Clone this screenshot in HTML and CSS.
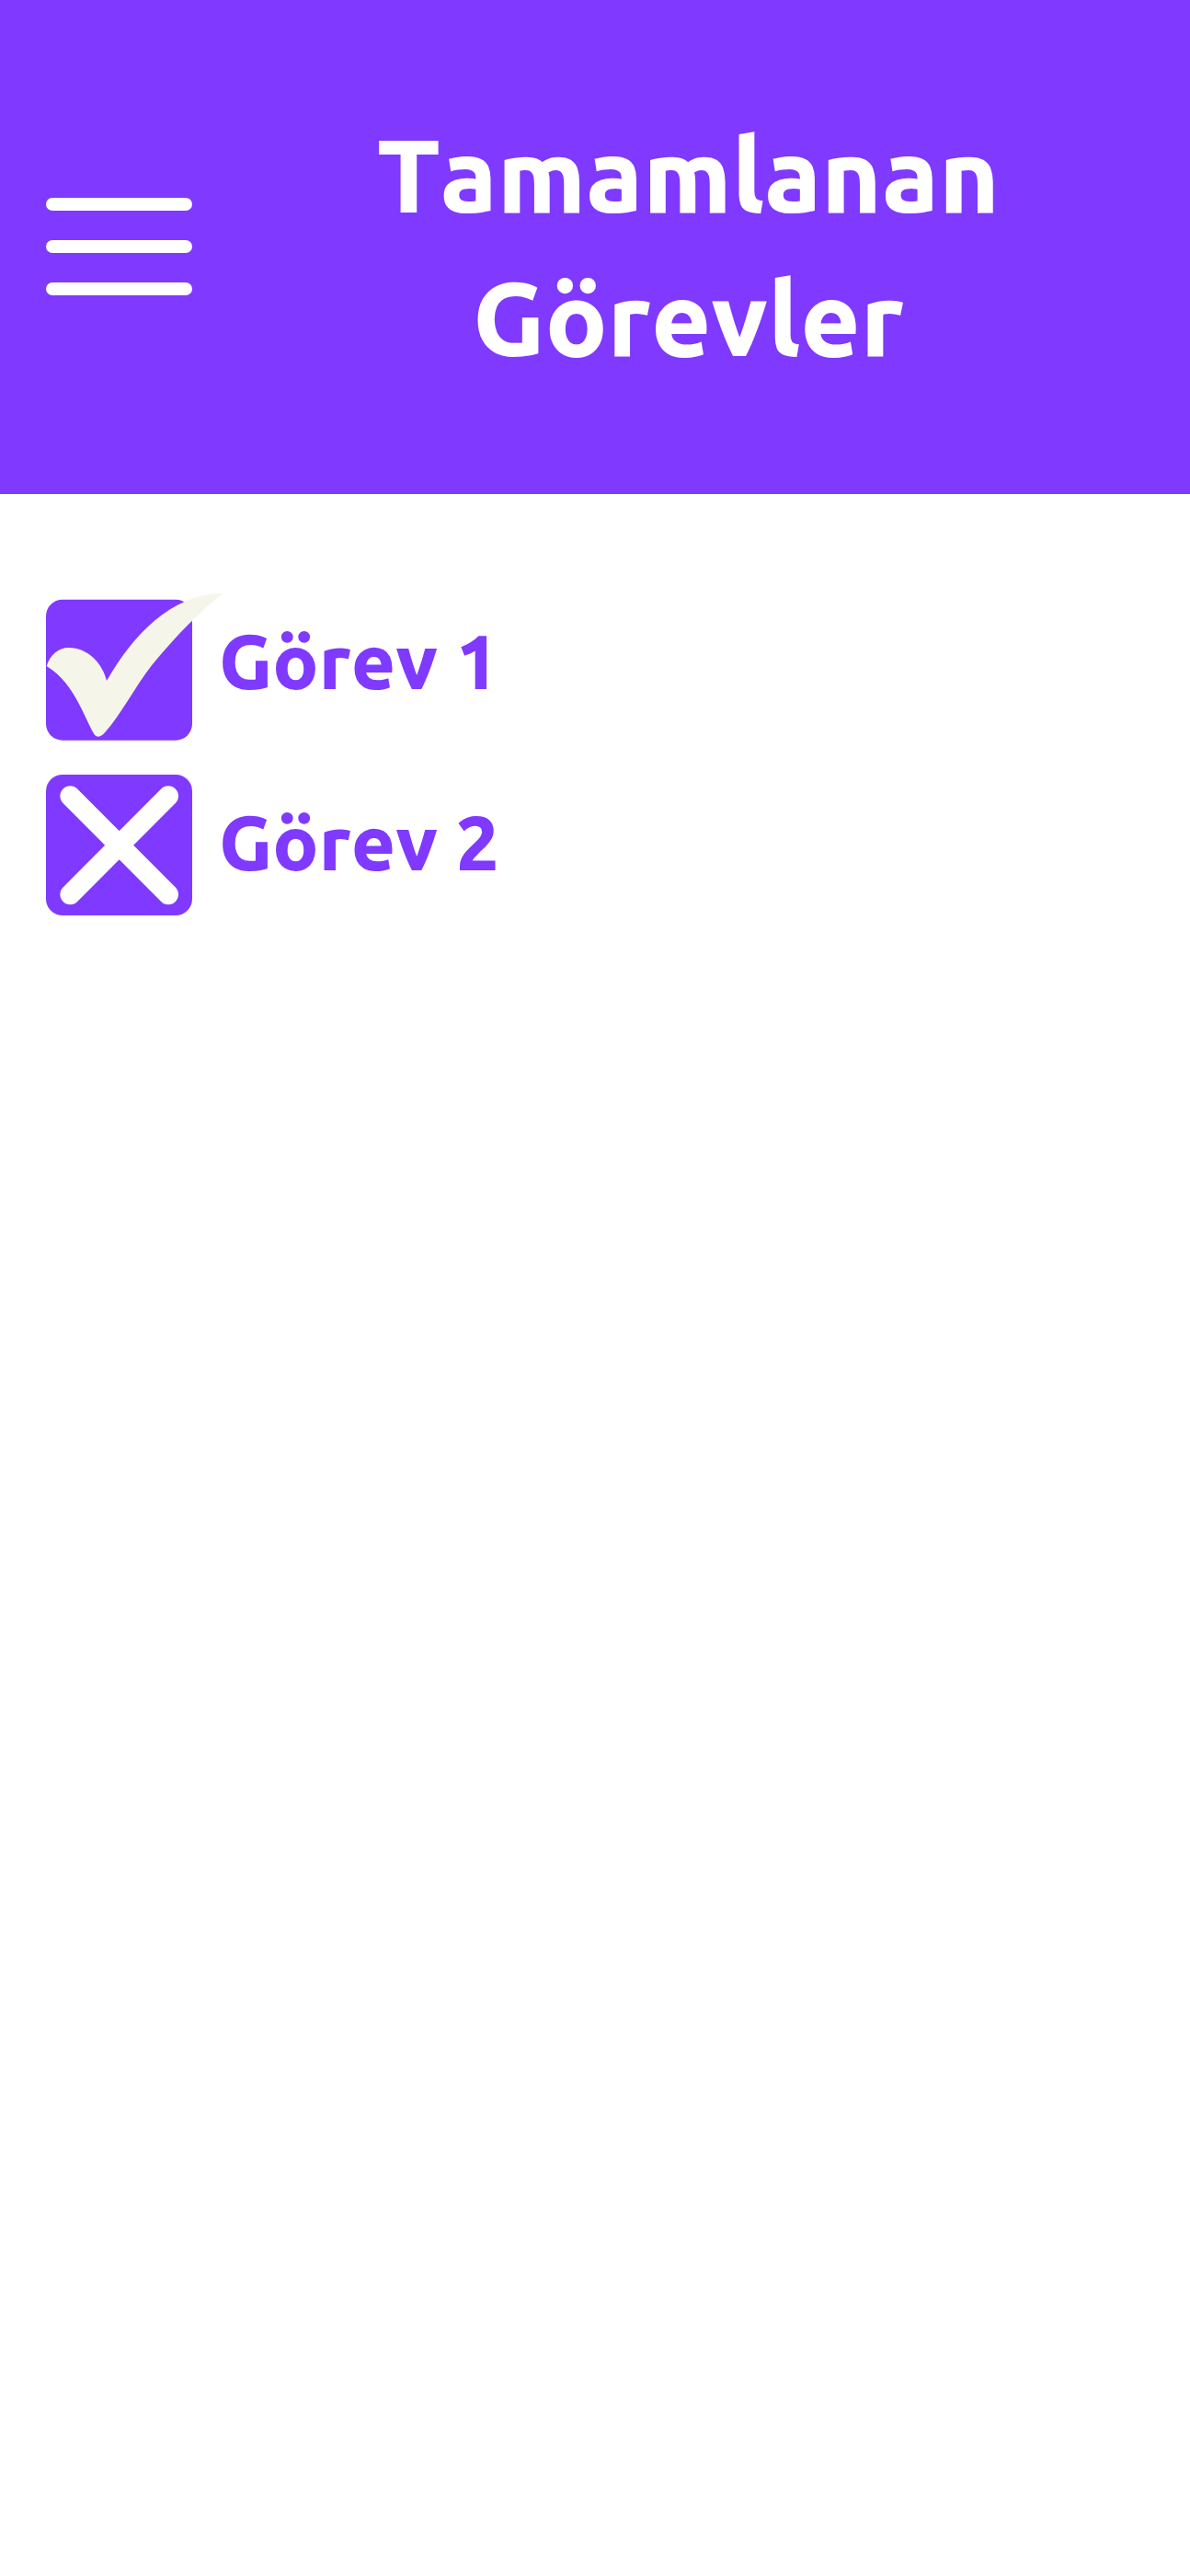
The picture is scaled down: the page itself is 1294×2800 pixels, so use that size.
FILE: index.html
```html
<!DOCTYPE html>
<html lang="tr">
<head>
<meta charset="utf-8">
<meta name="viewport" content="width=device-width, initial-scale=1">
<title>Tamamlanan Görevler</title>
<link rel="stylesheet" href="styles.css">
</head>
<body>
<header class="header">
  <button class="menu" type="button" aria-label="Menü">
    <span class="menu-bar"></span>
    <span class="menu-bar"></span>
    <span class="menu-bar"></span>
  </button>
  <h1 class="title">Tamamlanan Görevler</h1>
</header>
<main>
  <ul class="tasks">
    <li class="task">
      <span class="tick">
        <input class="tick-input" type="checkbox" id="task-1" checked>
        <svg class="tick-icon" width="159" height="167" viewBox="60 54 477 501" aria-hidden="true">
          <rect class="tick-box" x="60" y="95" width="477" height="459" rx="54"/>
          <path class="tick-mark" d="M62 312C73 276 100 252 134 252C198 252 245 305 258 360C342 214 466 77 636 74C562 136 488 208 406 308C352 377 308 465 252 529C238 545 226 546 217 534C182 474 151 366 62 312Z"/>
        </svg>
      </span>
      <label class="task-name" for="task-1">Görev 1</label>
    </li>
    <li class="task">
      <span class="tick">
        <input class="tick-input" type="checkbox" id="task-2">
        <svg class="tick-icon" width="159" height="153" viewBox="60 64 477 459" aria-hidden="true">
          <rect class="tick-box" x="60" y="64" width="477" height="459" rx="54"/>
          <path class="tick-cross" d="M139 134L459 455M459 134L139 455"/>
        </svg>
      </span>
      <label class="task-name" for="task-2">Görev 2</label>
    </li>
  </ul>
</main>
</body>
</html>
```
FILE: styles.css
```css
* {
  box-sizing: border-box;
}

body {
  margin: 0;
  background: #fff;
  font-family: Ubuntu, "Noto Sans", sans-serif;
  font-weight: 800;
  font-kerning: none;
}

.header {
  display: flex;
  align-items: center;
  gap: 44px;
  padding: 112px 50px 113px;
  background: #7f39ff;
  color: #fff;
}

.menu {
  display: flex;
  flex: none;
  flex-direction: column;
  gap: 32px;
  width: 159px;
  padding: 0;
  border: 0;
  background: none;
  cursor: pointer;
}

.menu-bar {
  height: 14px;
  border-radius: 7px;
  background: #fff;
}

.title {
  flex: 1;
  margin: 0;
  padding: 0 148px;
  font-size: 112px;
  font-weight: 800;
  line-height: 156px;
  text-align: center;
}

.tasks {
  display: flex;
  flex-direction: column;
  gap: 37px;
  margin: 0;
  padding: 101px 50px;
  list-style: none;
}

.task {
  display: flex;
  align-items: center;
  gap: 29px;
}

.tick {
  display: grid;
  flex: none;
}

.tick-input,
.tick-icon {
  grid-area: 1 / 1;
}

.tick-input {
  width: 100%;
  height: 100%;
  margin: 0;
  opacity: 0;
}

.tick-icon {
  display: block;
  overflow: visible;
  pointer-events: none;
}

.tick-box {
  fill: #7f39ff;
}

.tick-mark {
  fill: #f5f5e9;
}

.tick-cross {
  fill: none;
  stroke: #fff;
  stroke-width: 66px;
  stroke-linecap: round;
}

.task-name {
  padding-bottom: 6px;
  color: #7f39ff;
  font-size: 83px;
  line-height: 116px;
}
```
